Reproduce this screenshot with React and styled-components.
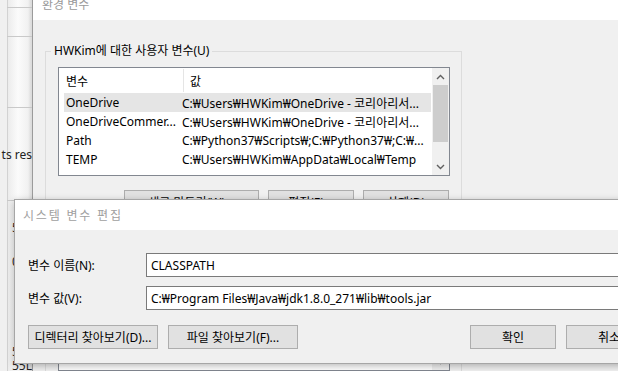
import React from 'react';
import styled, { createGlobalStyle } from 'styled-components';

const GlobalStyle = createGlobalStyle`
  html, body {
    margin: 0;
    padding: 0;
  }
  body {
    font-family: "Noto Sans", "Noto Sans CJK KR", sans-serif;
    font-size: 12px;
    color: #000;
    background: #f0f0f0;
    overflow: hidden;
  }
`;

// the desktop: windows lie on it at their own places
const Desktop = styled.div`
  position: relative;
  width: 618px;
  height: 371px;
  overflow: hidden;
  background: #f0f0f0;
`;

// window far behind, only a thin strip shows on the left
const BackWindow = styled.aside`
  position: absolute;
  left: 0;
  top: 0;
  width: 32px;
  height: 371px;
  display: flex;
  flex-direction: column;
  background: linear-gradient(
    to right,
    #f0f0f0 0 7px,
    #d2d2d2 7px 8px,
    #ececec 8px,
    #fbfbfb 18px,
    #f1f1f1 28px,
    #dcdcdc 31px
  );
`;

const StripCell = styled.div`
  height: ${({ $h }) => $h}px;
  flex-shrink: 0;
  margin-left: 7px;
  border-bottom: 1px solid #c9c9c9;
  display: flex;
  align-items: center;
  justify-content: flex-end;
  white-space: nowrap;
  color: #222;
`;

const StripNumbers = styled.div`
  display: flex;
  flex-direction: column;
  padding: 18px 0 0 12px;
  gap: 16px;
  white-space: nowrap;
  color: #222;
  line-height: 18px;
`;

const StripNumber = styled.span`
  margin-top: ${({ $gap }) => $gap || 0}px;
`;

// 환경 변수 window
const EnvWindow = styled.section`
  position: absolute;
  left: 32px;
  top: -10px;
  right: 0;
  height: 392px;
  border-left: 1px solid #9b9b9b;
  display: flex;
  flex-direction: column;
  background: #f0f0f0;
`;

const EnvTitle = styled.header`
  height: 30px;
  flex-shrink: 0;
  box-sizing: border-box;
  padding: 0 0 2px 9px;
  background: #fff;
  display: flex;
  align-items: center;
  color: #9a9a9a;
`;

const EnvBody = styled.div`
  flex: 1;
  padding: 24px 0 0 12px;
  display: flex;
  flex-direction: column;
  gap: 8px;
`;

const GroupBox = styled.fieldset`
  margin: 0;
  width: 417px;
  min-width: 0;
  box-sizing: border-box;
  border: 1px solid #dcdcdc;
  padding: 9px 11px 10px 12px;
`;

const Legend = styled.legend`
  padding: 0 3px;
  margin-left: -7px;
  line-height: 14px;
`;

const ListView = styled.div`
  height: ${({ $h }) => $h}px;
  box-sizing: border-box;
  border: 1px solid #828790;
  background: #fff;
  display: flex;
  overflow: hidden;
`;

const ListMain = styled.div`
  flex: 1;
  min-width: 0;
  display: flex;
  flex-direction: column;
`;

const ListHeader = styled.div`
  height: 25px;
  flex-shrink: 0;
  display: flex;
  align-items: stretch;
`;

const HeaderCell = styled.div`
  width: ${({ $w }) => ($w ? `${$w}px` : 'auto')};
  flex: ${({ $w }) => ($w ? 'none' : 1)};
  padding-left: ${({ $pad }) => $pad}px;
  border-right: ${({ $divider }) => ($divider ? '1px solid #e5e5e5' : 'none')};
  margin: ${({ $divider }) => ($divider ? '1px 0' : '0')};
  display: flex;
  align-items: center;
`;

const Row = styled.div`
  height: 19px;
  flex-shrink: 0;
  margin: 0 1px 0 5px;
  display: flex;
  align-items: center;
  background: ${({ $selected }) => ($selected ? '#e5e5e5' : 'transparent')};
  white-space: nowrap;
`;

const Cell = styled.div`
  width: ${({ $w }) => ($w ? `${$w}px` : 'auto')};
  flex: ${({ $w }) => ($w ? 'none' : 1)};
  padding-left: ${({ $pad }) => $pad}px;
  box-sizing: border-box;
  overflow: hidden;
`;

const ScrollBar = styled.div`
  width: 17px;
  flex-shrink: 0;
  background: #f0f0f0;
  display: flex;
  flex-direction: column;
  align-items: center;
`;

const ScrollArrow = styled.div`
  height: 17px;
  flex-shrink: 0;
  display: flex;
  align-items: center;
  justify-content: center;
`;

const ScrollTrack = styled.div`
  flex: 1;
  width: 100%;
  display: flex;
  justify-content: center;
`;

const ScrollThumb = styled.div`
  width: 15px;
  height: ${({ $h }) => $h}px;
  background: #cdcdcd;
`;

const ButtonRow = styled.div`
  display: flex;
  justify-content: flex-end;
  gap: 9px;
  margin-top: 14px;
  padding-right: 1px;
`;

const WinButton = styled.button`
  width: ${({ $w }) => $w}px;
  height: ${({ $h }) => $h || 23}px;
  padding: 0;
  box-sizing: border-box;
  border: 1px solid #adadad;
  background: #e1e1e1;
  color: #000;
  font: inherit;
  white-space: nowrap;
  overflow: hidden;
`;

// 시스템 변수 편집 dialog
const Dialog = styled.section`
  position: absolute;
  left: 14px;
  top: 199px;
  width: 652px;
  height: 165px;
  box-sizing: border-box;
  border: 1px solid #a6a6a6;
  background: #f0f0f0;
  box-shadow: 0 2px 7px rgba(0, 0, 0, 0.28);
  display: flex;
  flex-direction: column;
`;

const DialogTitle = styled.header`
  height: 30px;
  flex-shrink: 0;
  padding-left: 8px;
  background: #fff;
  display: flex;
  align-items: center;
  color: #a0a0a0;
  letter-spacing: 1.8px;
`;

const DialogBody = styled.div`
  flex: 1;
  padding: 23px 13px 14px 13px;
  display: flex;
  flex-direction: column;
`;

const FieldGrid = styled.div`
  display: grid;
  grid-template-columns: 118px 1fr;
  row-gap: 9px;
  align-items: center;
`;

const FieldLabel = styled.label`
  white-space: nowrap;
`;

const TextInput = styled.input`
  height: 24px;
  box-sizing: border-box;
  border: 1px solid #7a7a7a;
  padding: 0 4px;
  background: #fff;
  color: #000;
  font: inherit;
  outline: none;
`;

const DialogButtons = styled.div`
  display: flex;
  gap: 10px;
  margin-top: 15px;
`;

const Spacer = styled.div`
  flex: 1;
`;

const Chevron = ({ down }) => (
  <svg width="9" height="6" viewBox="0 0 9 6">
    <polyline
      points={down ? '1,1 4.5,4.5 8,1' : '1,5 4.5,1.5 8,5'}
      fill="none"
      stroke="#606060"
      strokeWidth="1.4"
    />
  </svg>
);

const userVars = [
  ['OneDrive', 'C:₩Users₩HWKim₩OneDrive - 코리아리서...', true],
  ['OneDriveCommer...', 'C:₩Users₩HWKim₩OneDrive - 코리아리서...'],
  ['Path', 'C:₩Python37₩Scripts₩;C:₩Python37₩;C:₩...'],
  ['TEMP', 'C:₩Users₩HWKim₩AppData₩Local₩Temp'],
];

const systemVars = [
  ['ComSpec', 'C:₩WINDOWS₩system32₩cmd.exe'],
  ['DriverData', 'C:₩Windows₩System32₩Drivers₩DriverData'],
  ['JAVA_HOME', 'C:₩Program Files₩Java₩jdk1.8.0_271'],
  ['NUMBER_OF_PROCESSORS', '8'],
];

const VarList = ({ rows, height, thumb }) => (
  <ListView $h={height}>
    <ListMain>
      <ListHeader>
        <HeaderCell $w={117} $pad={7} $divider>변수</HeaderCell>
        <HeaderCell $pad={6}>값</HeaderCell>
      </ListHeader>
      {rows.map(([name, value, selected]) => (
        <Row key={name} $selected={selected}>
          <Cell $w={112} $pad={2}>{name}</Cell>
          <Cell $pad={6}>{value}</Cell>
        </Row>
      ))}
    </ListMain>
    <ScrollBar>
      <ScrollArrow><Chevron /></ScrollArrow>
      <ScrollTrack>
        <ScrollThumb $h={thumb} />
      </ScrollTrack>
      <ScrollArrow><Chevron down /></ScrollArrow>
    </ScrollBar>
  </ListView>
);

const App = () => {
  return (
    <>
      <GlobalStyle />
      <Desktop>
        <BackWindow>
          <StripCell $h={7} />
          <StripCell $h={28} />
          <StripCell $h={70} />
          <StripCell $h={92}>ts res</StripCell>
          <StripNumbers>
            <StripNumber>5</StripNumber>
            <StripNumber>0</StripNumber>
            <StripNumber $gap={56}>55</StripNumber>
            <StripNumber $gap={-20}>55LE</StripNumber>
          </StripNumbers>
        </BackWindow>

        <EnvWindow>
          <EnvTitle>환경 변수</EnvTitle>
          <EnvBody>
            <GroupBox>
              <Legend>HWKim에 대한 사용자 변수(U)</Legend>
              <VarList rows={userVars} height={109} thumb={57} />
              <ButtonRow>
                <WinButton $w={135}>새로 만들기(W)...</WinButton>
                <WinButton $w={86}>편집(E)...</WinButton>
                <WinButton $w={86}>삭제(D)</WinButton>
              </ButtonRow>
            </GroupBox>
            <GroupBox>
              <Legend>시스템 변수(S)</Legend>
              <VarList rows={systemVars} height={116} thumb={40} />
            </GroupBox>
          </EnvBody>
        </EnvWindow>

        <Dialog>
          <DialogTitle>시스템 변수 편집</DialogTitle>
          <DialogBody>
            <FieldGrid>
              <FieldLabel htmlFor="var-name">변수 이름(N):</FieldLabel>
              <TextInput id="var-name" value="CLASSPATH" readOnly />
              <FieldLabel htmlFor="var-value">변수 값(V):</FieldLabel>
              <TextInput
                id="var-value"
                value="C:₩Program Files₩Java₩jdk1.8.0_271₩lib₩tools.jar"
                readOnly
              />
            </FieldGrid>
            <DialogButtons>
              <WinButton $w={130} $h={24}>디렉터리 찾아보기(D)...</WinButton>
              <WinButton $w={130} $h={24}>파일 찾아보기(F)...</WinButton>
              <Spacer />
              <WinButton $w={86} $h={24}>확인</WinButton>
              <WinButton $w={86} $h={24}>취소</WinButton>
            </DialogButtons>
          </DialogBody>
        </Dialog>
      </Desktop>
    </>
  );
};

export default App;
